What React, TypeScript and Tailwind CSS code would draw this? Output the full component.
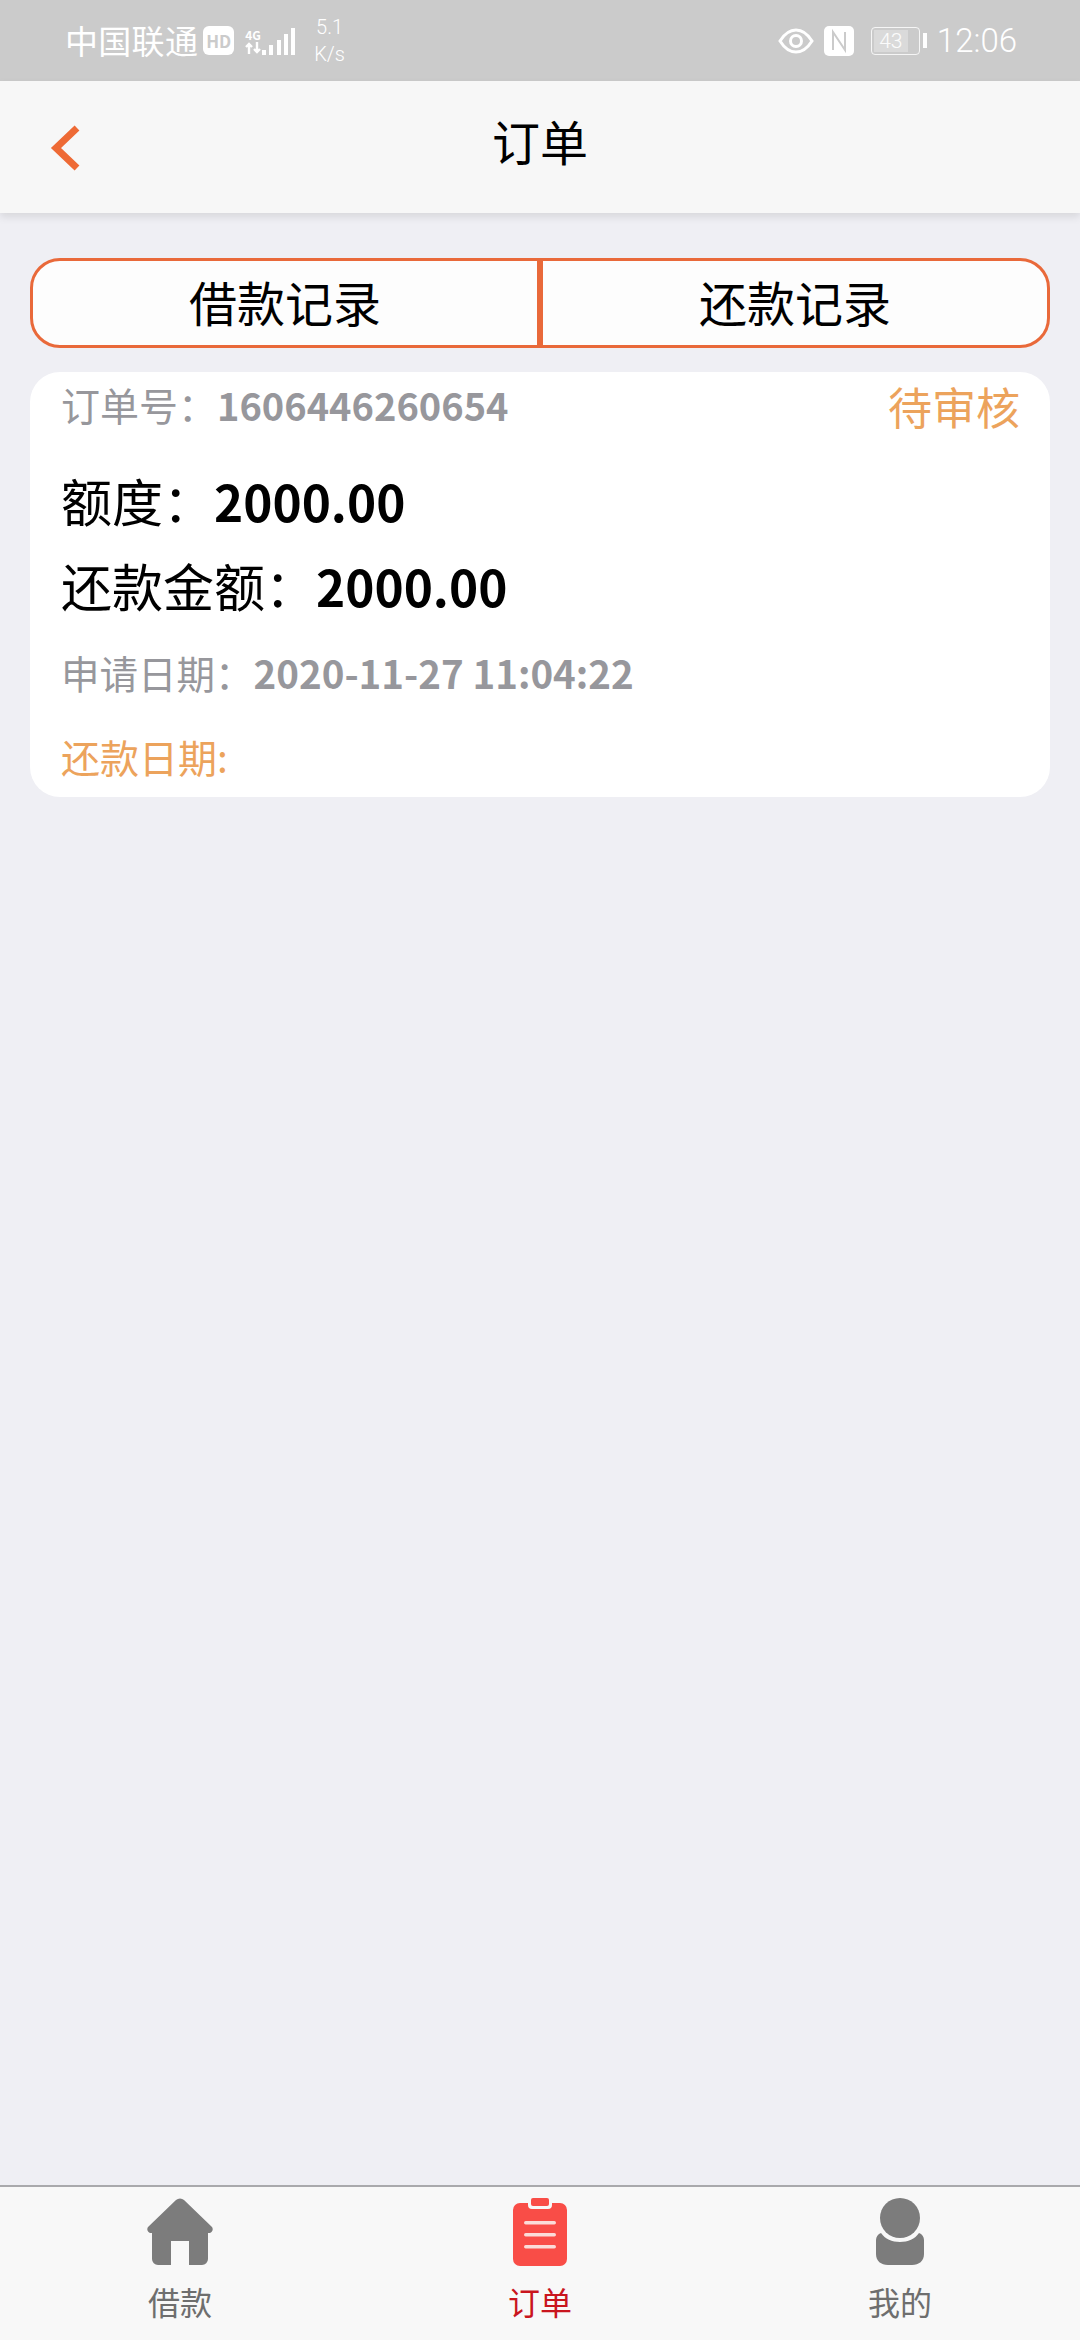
const cjk = 'font-["Noto_Sans_CJK_SC","Noto_Sans",sans-serif]';

function StatusBar() {
  return (
    <div className="h-[81px] shrink-0 bg-[#cbcbcb] text-white flex items-center justify-between pl-[65px] pr-[63px]">
      <div className="flex items-center">
        <span className="text-[33px] leading-none tracking-[0.3px]">中国联通</span>
        <span className="ml-[5px] w-[31px] h-[29px] rounded-[6px] bg-white text-[#cbcbcb] text-[17px] font-bold leading-[29px] text-center">HD</span>
        <div className="ml-[11px] w-[17px] flex flex-col items-start">
          <span className="text-[12px] font-bold leading-[14px]">4G</span>
          <svg width="17" height="12" viewBox="0 0 17 12" fill="none" stroke="#fff" strokeWidth="2.4">
            <path d="M4 12V2M1 5l3-3 3 3M12 0v10M9 7l3 3 3-3" />
          </svg>
        </div>
        <svg width="34" height="30" viewBox="0 0 34 30" fill="#fff">
          <rect x="0" y="24" width="4" height="5" />
          <rect x="7" y="19" width="4" height="10" />
          <rect x="15" y="14" width="4" height="15" />
          <rect x="22" y="8" width="4" height="21" />
          <rect x="29" y="2" width="4" height="27" />
        </svg>
        <div className="ml-[18px] flex flex-col font-['Roboto',sans-serif] font-light text-[20px] leading-[27px] text-center">
          <span>5.1</span>
          <span>K/s</span>
        </div>
      </div>
      <div className="flex items-center">
        <svg width="36" height="26" viewBox="0 0 36 26" fill="none" stroke="#fff">
          <path d="M2 13C7 5 12 2 18 2s11 3 16 11c-5 8-10 11-16 11S7 21 2 13Z" strokeWidth="3" />
          <circle cx="18" cy="13" r="5.5" strokeWidth="3" />
        </svg>
        <svg width="32" height="32" viewBox="0 0 32 32" className="ml-[9px]">
          <rect x="1" y="1" width="30" height="30" rx="5" fill="#fff" />
          <path d="M10 25V7l12 18V7" fill="none" stroke="#cbcbcb" strokeWidth="2" />
        </svg>
        <div className="ml-[16px] flex items-center">
          <div className="w-[49px] h-[28px] border border-white/80 rounded-[4px] p-[2px]">
            <div className="w-[34px] h-full bg-white/30 font-['Roboto',sans-serif] font-light text-[21px] leading-[22px] text-center text-white/90">43</div>
          </div>
          <div className="ml-[3px] w-[4px] h-[15px] bg-white" />
        </div>
        <span className="ml-[10px] text-[33px] leading-none font-light font-['Roboto',sans-serif]">12:06</span>
      </div>
    </div>
  );
}

function Header() {
  return (
    <div className="h-[132px] shrink-0 bg-[#f7f7f7] shadow-[0_4px_8px_rgba(0,0,0,0.1)] grid grid-cols-3 items-center">
      <div className="pl-[50px] pt-[2px]">
        <svg width="30" height="46" viewBox="0 0 30 46" fill="none" stroke="#ee6a35" strokeWidth="7">
          <path d="M27 3 6 23l21 20" />
        </svg>
      </div>
      <h1 className="text-center text-[48px] font-normal leading-none text-black pb-[14px]">订单</h1>
    </div>
  );
}

function Tabs() {
  return (
    <div className="h-[90px] flex rounded-[30px] border-[3px] border-[#e9693a] bg-[#fdfdfd] text-[48px] text-black">
      <div className="flex-1 flex items-center justify-center pb-[4px] border-r-[3px] border-[#e9693a]">借款记录</div>
      <div className="flex-1 flex items-center justify-center pb-[4px] border-l-[3px] border-[#e9693a]">还款记录</div>
    </div>
  );
}

function OrderCard() {
  return (
    <div className="mt-[24px] h-[425px] bg-white rounded-[30px] pl-[31px] pr-[30px] pt-[9px]">
      <div className="flex justify-between items-start">
        <p className="text-[39px] leading-[46px] text-[#97979c]">
          订单号：<span className="text-[38px] font-bold">1606446260654</span>
        </p>
        <span className="text-[44px] leading-[50px] text-[#eca35c]">待审核</span>
      </div>
      <p className="mt-[37px] text-[51px] leading-[64px] text-black">
        额度：<span className="text-[49.5px] font-bold">2000.00</span>
      </p>
      <p className="mt-[20px] text-[51px] leading-[64px] text-black">
        还款金额：<span className="text-[49.5px] font-bold">2000.00</span>
      </p>
      <p className="mt-[30px] text-[38.5px] leading-[48px] text-[#97979c]">
        申请日期：<span className="font-bold">2020-11-27 11:04:22</span>
      </p>
      <p className="mt-[36px] text-[39px] leading-[48px] text-[#eca35c]">还款日期:</p>
    </div>
  );
}

function HomeIcon() {
  return (
    <svg width="68" height="68" viewBox="0 0 68 68" fill="#7c7c7c">
      <path d="M30 2a6 6 0 0 1 8 0l28 27a4 4 0 0 1-2 6h-2v26a6 6 0 0 1-6 6H43V43H25v24H12a6 6 0 0 1-6-6V35H4a4 4 0 0 1-2-6Z" />
    </svg>
  );
}

function OrderIcon() {
  return (
    <svg width="56" height="68" viewBox="0 0 56 68">
      <path d="M8 5h8v2a4 4 0 0 0 4 4h16a4 4 0 0 0 4-4V5h8a7 7 0 0 1 7 7v49a7 7 0 0 1-7 7H8a7 7 0 0 1-7-7V12a7 7 0 0 1 7-7Z" fill="#f94d47" />
      <rect x="19" y="0" width="18" height="8" rx="2" fill="#f94d47" />
      <rect x="12" y="23" width="32" height="3.5" rx="1.7" fill="#fbdcd8" />
      <rect x="12" y="35" width="32" height="3.5" rx="1.7" fill="#fbdcd8" />
      <rect x="12" y="47" width="32" height="3.5" rx="1.7" fill="#fbdcd8" />
    </svg>
  );
}

function UserIcon() {
  return (
    <svg width="50" height="68" viewBox="0 0 50 68" fill="#7c7c7c">
      <circle cx="25" cy="20" r="20" />
      <path d="M6 35c4 6 11 9 19 9s15-3 19-9c3 1 5 4 5 7v14c0 7-5 11-12 11H13C6 67 1 63 1 56V42c0-3 2-6 5-7Z" />
    </svg>
  );
}

const navItems = [
  { label: '借款', icon: <HomeIcon />, labelClass: 'text-[#6e6e6e]' },
  { label: '订单', icon: <OrderIcon />, labelClass: 'text-[#c9151e]' },
  { label: '我的', icon: <UserIcon />, labelClass: 'text-[#6e6e6e]' },
];

function TabBar() {
  return (
    <div className="h-[155px] shrink-0 bg-[#f8f8f8] border-t-[2px] border-[#a9a9ac] grid grid-cols-3">
      {navItems.map((item) => (
        <div key={item.label} className="flex flex-col items-center pt-[11px]">
          <div className="h-[68px] flex items-center justify-center">{item.icon}</div>
          <span className={`mt-[15px] text-[32px] leading-[40px] ${item.labelClass}`}>{item.label}</span>
        </div>
      ))}
    </div>
  );
}

export default function App() {
  return (
    <div className={`h-[2340px] w-[1080px] flex flex-col bg-[#efeff4] overflow-hidden ${cjk}`}>
      <StatusBar />
      <Header />
      <main className="flex-1 px-[30px] pt-[45px]">
        <Tabs />
        <OrderCard />
      </main>
      <TabBar />
    </div>
  );
}
